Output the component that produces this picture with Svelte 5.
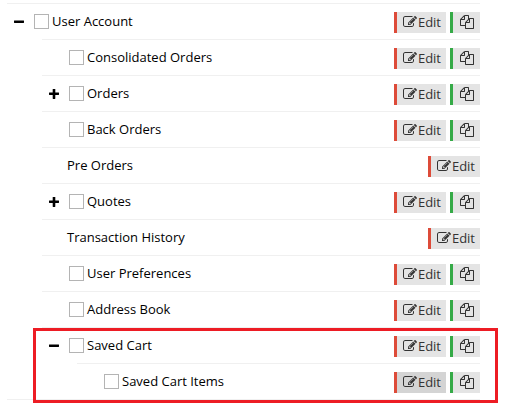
<script lang="ts">
  interface MenuNode {
    id: string;
    label: string;
    selectable?: boolean;
    checked?: boolean;
    expanded?: boolean;
    highlighted?: boolean;
    active?: boolean;
    children?: MenuNode[];
  }

  let nodes: MenuNode[] = $state([
    {
      id: 'user-account',
      label: 'User Account',
      selectable: true,
      expanded: true,
      children: [
        { id: 'consolidated-orders', label: 'Consolidated Orders', selectable: true },
        { id: 'orders', label: 'Orders', selectable: true, expanded: false, children: [] },
        { id: 'back-orders', label: 'Back Orders', selectable: true },
        { id: 'pre-orders', label: 'Pre Orders' },
        { id: 'quotes', label: 'Quotes', selectable: true, expanded: false, children: [] },
        { id: 'transaction-history', label: 'Transaction History' },
        { id: 'user-preferences', label: 'User Preferences', selectable: true },
        { id: 'address-book', label: 'Address Book', selectable: true },
        {
          id: 'saved-cart',
          label: 'Saved Cart',
          selectable: true,
          expanded: true,
          highlighted: true,
          children: [
            { id: 'saved-cart-items', label: 'Saved Cart Items', selectable: true, active: true }
          ]
        }
      ]
    }
  ]);
</script>

{#snippet branch(items: MenuNode[])}
  <ul class="branch">
    {#each items as node (node.id)}
      <li class="node" class:highlighted={node.highlighted}>
        <div class="row">
          {#if node.children}
            <button
              class="toggle"
              aria-label={node.expanded ? 'Collapse' : 'Expand'}
              aria-expanded={node.expanded}
              onclick={() => (node.expanded = !node.expanded)}
            >
              <svg viewBox="0 0 10 10" width="10" height="10">
                <rect x="0" y="3.4" width="10" height="2.6" rx="0.4" />
                {#if !node.expanded}
                  <rect x="3.7" y="0" width="2.6" height="10" rx="0.4" />
                {/if}
              </svg>
            </button>
          {/if}

          {#if node.selectable}
            <label class="name">
              <input type="checkbox" bind:checked={node.checked} />
              <span class="text">{node.label}</span>
            </label>
          {:else}
            <div class="name plain">
              <span class="text">{node.label}</span>
            </div>
          {/if}

          <div class="actions">
            <button class="action edit" class:active={node.active}>
              <svg viewBox="0 0 1792 1792" width="14" height="14">
                <path d="M888 1184l116-116-152-152-116 116v56h96v96h56zm440-720q-16-16-33 1l-350 350q-17 17-1 33t33-1l350-350q17-17 1-33zm80 594v190q0 119-84.5 203.5t-203.5 84.5h-832q-119 0-203.5-84.5t-84.5-203.5v-832q0-119 84.5-203.5t203.5-84.5h832q63 0 117 25 15 7 18 23 3 17-9 29l-49 49q-14 14-32 8-23-6-45-6h-832q-66 0-113 47t-47 113v832q0 66 47 113t113 47h832q66 0 113-47t47-113v-126q0-13 9-22l64-64q15-15 35-7t20 29zm-96-738l288 288-672 672h-288v-288zm444 132l-92 92-288-288 92-92q28-28 68-28t68 28l152 152q28 28 28 68t-28 68z" />
              </svg>
              Edit
            </button>
            {#if node.selectable}
              <button class="action copy" aria-label="Copy">
                <svg viewBox="0 0 1792 1792" width="14" height="14">
                  <path d="M1696 384q40 0 68 28t28 68v1216q0 40-28 68t-68 28h-960q-40 0-68-28t-28-68v-288h-544q-40 0-68-28t-28-68v-672q0-40 20-88t48-76l408-408q28-28 76-48t88-20h416q40 0 68 28t28 68v328q68-40 128-40h416zm-544 213l-299 299h299v-299zm-640-384l-299 299h299v-299zm196 647l316-316v-416h-384v416q0 40-28 68t-68 28h-416v640h512v-256q0-40 20-88t48-76zm956 804v-1152h-384v416q0 40-28 68t-68 28h-416v640h896z" />
                </svg>
              </button>
            {/if}
          </div>
        </div>

        {#if node.expanded && node.children?.length}
          {@render branch(node.children)}
        {/if}
      </li>
    {/each}
  </ul>
{/snippet}

<main class="page">
  <div class="menu-tree">
    {@render branch(nodes)}
  </div>
</main>

<style>
  :global(body) {
    margin: 0;
    background: #fff;
  }

  .page {
    padding: 3px 26px 19px 7px;
    font-family: 'Open Sans', sans-serif;
    font-size: 13px;
    color: #000;
  }

  .menu-tree {
    border-bottom: 1px solid #f0f0f0;
  }

  .branch {
    margin: 0;
    padding: 0;
    list-style: none;
  }

  .branch .branch {
    padding-left: 35px;
  }

  .node {
    position: relative;
  }

  /* frame drawn around a whole branch, over the row borders */
  .highlighted::after {
    content: '';
    position: absolute;
    inset: 1px -18px -4px -9px;
    border: 3px solid #ed1c24;
    pointer-events: none;
  }

  .row {
    display: flex;
    align-items: center;
    height: 35px;
    padding-left: 27px;
    border-top: 1px solid #f0f0f0;
  }

  .toggle {
    display: flex;
    margin-left: -20px;
    margin-right: 10px;
    padding: 0;
    border: 0;
    background: none;
    cursor: pointer;
  }

  .name {
    display: flex;
    align-items: center;
    gap: 3px;
    line-height: 18px;
  }

  .plain {
    margin-left: -2px;
  }

  .text {
    padding-bottom: 2px;
  }

  .name input {
    appearance: none;
    width: 15px;
    height: 15px;
    margin: 0;
    border: 1px solid #b4b4b4;
    background: #fff;
  }

  .name input:checked {
    background: #555;
    box-shadow: inset 0 0 0 3px #fff;
  }

  .actions {
    display: flex;
    gap: 4px;
    margin-left: auto;
    padding-top: 2px;
  }

  .action {
    display: flex;
    align-items: center;
    gap: 1px;
    height: 21px;
    padding: 0 5px 1px 6px;
    border: 0;
    border-left: 3px solid;
    background: #e4e4e4;
    color: #333;
    font-family: inherit;
    font-size: 13px;
    line-height: 20px;
    cursor: pointer;
  }

  .action:hover,
  .action.active {
    background: #d4d4d4;
  }

  .edit {
    border-left-color: #dd4b39;
  }

  .copy {
    padding-right: 6px;
    padding-left: 7px;
    border-left-color: #35aa47;
  }

  svg {
    display: block;
    fill: currentColor;
  }

  .toggle svg {
    fill: #000;
  }
</style>
